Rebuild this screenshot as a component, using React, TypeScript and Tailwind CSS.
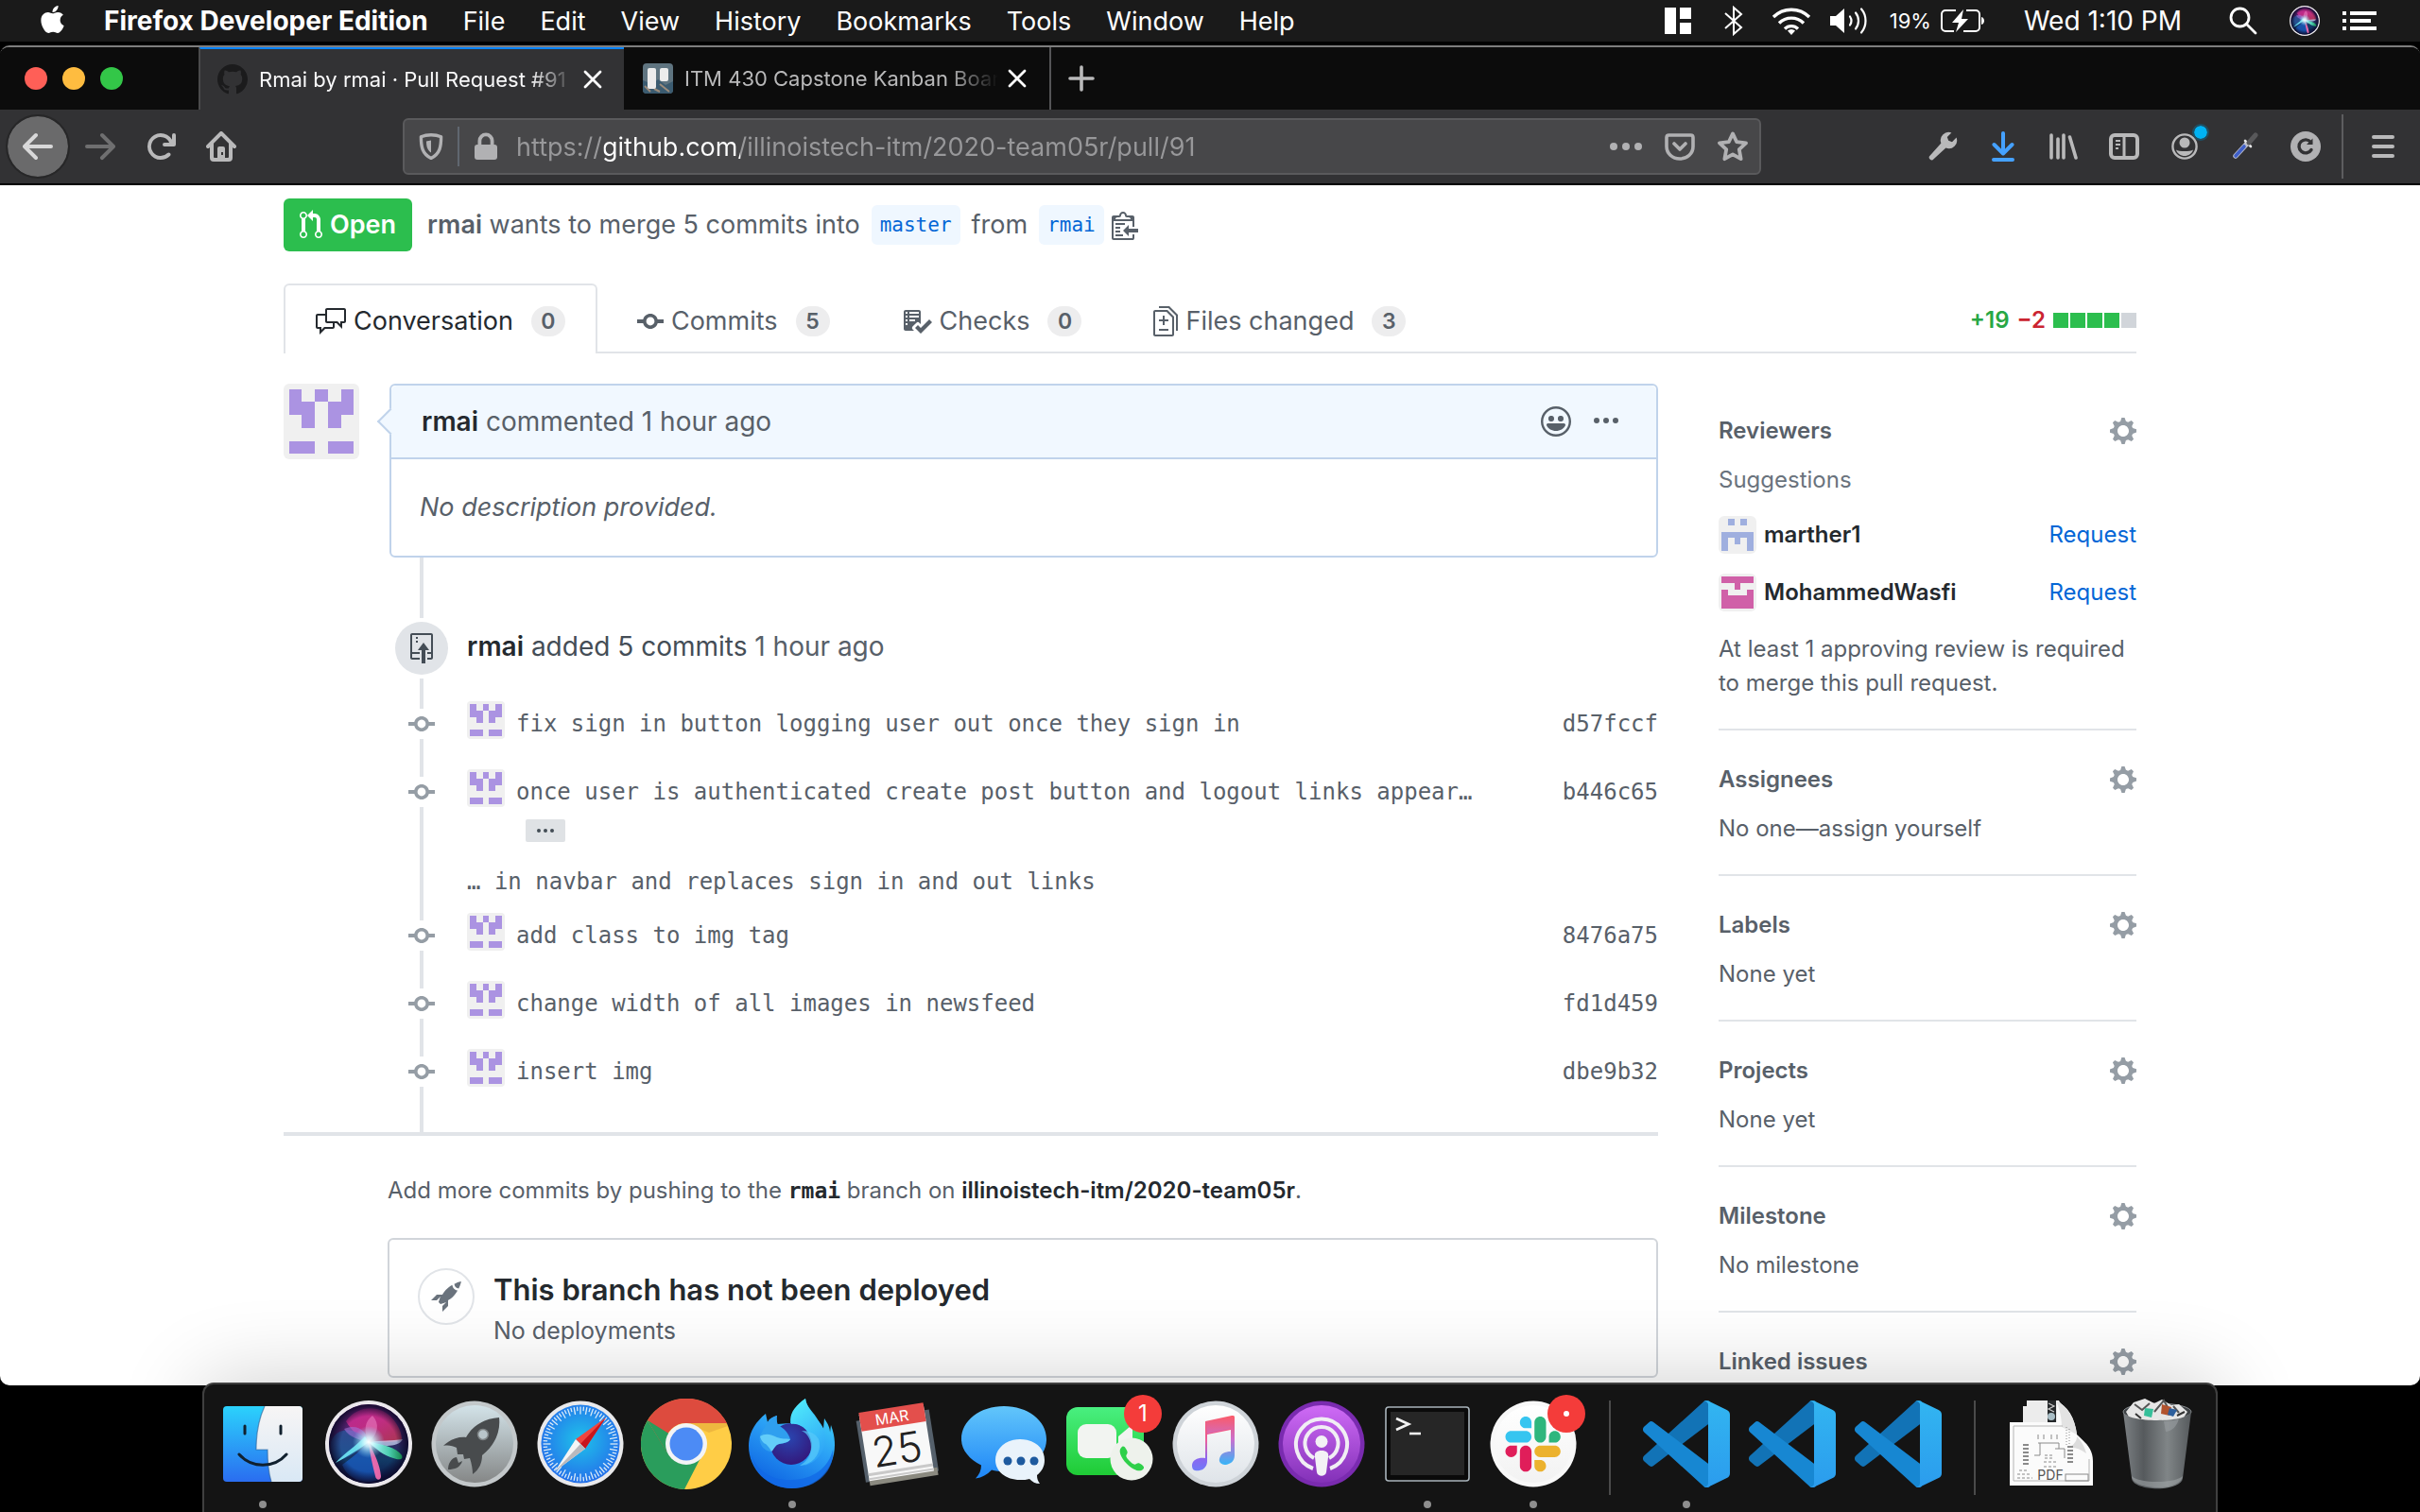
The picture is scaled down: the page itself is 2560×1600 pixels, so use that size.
import type { ReactNode } from "react";
import { FaApple } from "react-icons/fa";

/* ---------- shared icon helper ---------- */

type IconProps = { d: string; vb: string; className: string };

function Glyph({ d, vb, className }: IconProps) {
  return (
    <svg viewBox={vb} className={className} fill="currentColor" fillRule="evenodd" aria-hidden="true">
      <path d={d} />
    </svg>
  );
}

const P = {
  pullRequest:
    "M11 11.28V5c-.03-.78-.34-1.47-.94-2.06C9.46 2.35 8.78 2.03 8 2H7V0L4 3l3 3V4h1c.27.02.48.11.69.31.21.2.3.42.31.69v6.28A1.993 1.993 0 0 0 10 15a1.993 1.993 0 0 0 1-3.72zm-1 2.92c-.66 0-1.2-.55-1.2-1.2 0-.65.55-1.2 1.2-1.2.65 0 1.2.55 1.2 1.2 0 .65-.55 1.2-1.2 1.2zM4 3c0-1.11-.89-2-2-2a1.993 1.993 0 0 0-1 3.72v6.56A1.993 1.993 0 0 0 2 15a1.993 1.993 0 0 0 1-3.72V4.72c.59-.34 1-.98 1-1.72zm-.8 10c0 .66-.55 1.2-1.2 1.2-.65 0-1.2-.55-1.2-1.2 0-.65.55-1.2 1.2-1.2.65 0 1.2.55 1.2 1.2zM2 4.2C1.34 4.2.8 3.65.8 3c0-.65.55-1.2 1.2-1.2.65 0 1.2.55 1.2 1.2 0 .65-.55 1.2-1.2 1.2z",
  discussion:
    "M15 1H6c-.55 0-1 .45-1 1v2H1c-.55 0-1 .45-1 1v6c0 .55.45 1 1 1h1v3l3-3h4c.55 0 1-.45 1-1V9h1l3 3V9h1c.55 0 1-.45 1-1V2c0-.55-.45-1-1-1zM9 11H4.500L3 12.500V11H1V5h4v3c0 .55.45 1 1 1h3v2zm6-3h-2v1.500L11.500 8H6V2h9v6z",
  commit:
    "M10.86 7c-.45-1.72-2-3-3.86-3-1.86 0-3.41 1.28-3.86 3H0v2h3.14c.45 1.72 2 3 3.86 3 1.86 0 3.41-1.28 3.86-3H14V7h-3.14zM7 10.2c-1.22 0-2.2-.98-2.2-2.2 0-1.22.98-2.2 2.2-2.2 1.22 0 2.2.98 2.2 2.2 0 1.22-.98 2.2-2.2 2.2z",
  checklist:
    "M16 8.5l-6 6-3-3L8.500 10l1.500 1.500L14.500 7 16 8.500zM5.7 12.2l.8.8H2c-.55 0-1-.45-1-1V3c0-.55.45-1 1-1h7c.55 0 1 .45 1 1v6.500l-.8-.8c-.39-.39-1.03-.39-1.42 0L5.7 10.8a.996.996 0 0 0 0 1.41v-.01zM4 4h5V3H4v1zm0 2h5V5H4v1zm0 2h3V7H4v1zM3 9H2v1h1V9zm0-2H2v1h1V7zm0-2H2v1h1V5zm0-2H2v1h1V3z",
  diff: "M6 7h2v1H6v2H5V8H3V7h2V5h1v2zm-3 6h5v-1H3v1zM7.500 2L11 5.500V15c0 .55-.45 1-1 1H1c-.55 0-1-.45-1-1V3c0-.55.45-1 1-1h6.500zM10 6L7 3H1v12h9V6zM8.500 0H3v1h5l4 4v8h1V4.500L8.500 0z",
  gear: "M14 8.77v-1.6l-1.94-.64-.45-1.09.88-1.84-1.13-1.13-1.81.91-1.09-.45-.69-1.92h-1.6l-.63 1.94-1.11.45-1.84-.88-1.13 1.13.91 1.81-.45 1.09L0 7.23v1.59l1.94.64.45 1.09-.88 1.84 1.13 1.13 1.81-.91 1.09.45.69 1.92h1.59l.63-1.94 1.11-.45 1.84.88 1.13-1.13-.92-1.81.47-1.09L14 8.75v.02zM7 11c-1.66 0-3-1.34-3-3s1.34-3 3-3 3 1.34 3 3-1.34 3-3 3z",
  smiley:
    "M8 0C3.58 0 0 3.58 0 8s3.58 8 8 8 8-3.58 8-8-3.58-8-8-8zm4.81 12.81a6.72 6.72 0 0 1-2.17 1.45c-.83.36-1.72.53-2.64.53-.92 0-1.81-.17-2.64-.53-.81-.34-1.55-.83-2.17-1.45a6.773 6.773 0 0 1-1.45-2.17A6.59 6.59 0 0 1 1.21 8c0-.92.17-1.81.53-2.64.34-.81.83-1.55 1.45-2.17.62-.62 1.36-1.11 2.17-1.45A6.59 6.59 0 0 1 8 1.21c.92 0 1.81.17 2.64.53.81.34 1.55.83 2.17 1.45.62.62 1.11 1.36 1.45 2.17.36.83.53 1.72.53 2.64 0 .92-.17 1.81-.53 2.64-.34.81-.83 1.55-1.45 2.17zM4 6.8v-.59c0-.66.53-1.19 1.2-1.19h.59c.66 0 1.19.53 1.19 1.19v.59c0 .67-.53 1.2-1.19 1.2H5.2C4.53 8 4 7.47 4 6.8zm5 0v-.59c0-.66.53-1.19 1.2-1.19h.59c.66 0 1.19.53 1.19 1.19v.59c0 .67-.53 1.2-1.19 1.2h-.59C9.53 8 9 7.47 9 6.8zm4 3.2c-.72 1.88-2.91 3-5 3s-4.28-1.13-5-3c-.14-.39.23-1 .66-1h8.59c.41 0 .89.61.75 1z",
  kebab:
    "M1.500 9a1.500 1.500 0 1 0 0-3 1.500 1.500 0 0 0 0 3zm5 0a1.500 1.500 0 1 0 0-3 1.500 1.500 0 0 0 0 3zM13 7.500a1.500 1.500 0 1 1-3 0 1.500 1.500 0 0 1 3 0z",
  repoPush:
    "M4 3H3V2h1v1zM3 5h1V4H3v1zm4 0L4 9h2v7h2V9h2L7 5zm4-5H1C.45 0 0 .45 0 1v12c0 .55.45 1 1 1h4v-1H1v-2h4v-1H1V1h10v9H9v1h2v2H9v1h2c.55 0 1-.45 1-1V1c0-.55-.45-1-1-1z",
  rocket:
    "M12.17 3.83c-.27-.27-.47-.55-.63-.88-.16-.31-.27-.66-.34-1.02-.58.33-1.16.7-1.73 1.13-.58.44-1.14.94-1.69 1.48-.7.7-1.33 1.81-1.78 2.45H3L0 10h3l2-2c-.34.77-1.02 2.98-1 3l1 1c.02.02 2.23-.64 3-1l-2 2v3l3-3v-3c.64-.45 1.75-1.09 2.45-1.78.55-.55 1.05-1.13 1.47-1.7.44-.58.81-1.16 1.14-1.72-.36-.08-.7-.19-1.03-.34a3.39 3.39 0 0 1-.86-.63zM16 0s-.09.38-.3 1.06c-.2.7-.55 1.58-1.06 2.66-.7-.08-1.27-.33-1.66-.72-.39-.39-.63-.94-.7-1.64C13.36.84 14.23.48 14.92.28 15.62.08 16 0 16 0z",
  clippy:
    "M2 13h4v1H2v-1zm5-6H2v1h5V7zm2 3V8l-3 3 3 3v-2h5v-2H9zM4.500 9H2v1h2.500V9zM2 12h2.500v-1H2v1zm9 1h1v2c-.02.28-.11.52-.3.7-.19.18-.42.28-.7.3H1c-.55 0-1-.45-1-1V4c0-.55.45-1 1-1h3c0-1.11.89-2 2-2 1.11 0 2 .89 2 2h3c.55 0 1 .45 1 1v5h-1V6H1v9h10v-2zM2 5h8c0-.55-.45-1-1-1H8c-.55 0-1-.45-1-1s-.45-1-1-1-1 .45-1 1-.45 1-1 1H3c-.55 0-1 .45-1 1z",
  github:
    "M8 0C3.58 0 0 3.58 0 8c0 3.54 2.29 6.53 5.47 7.59.4.07.55-.17.55-.38 0-.19-.01-.82-.01-1.49-2.01.37-2.53-.49-2.69-.94-.09-.23-.48-.94-.82-1.13-.28-.15-.68-.52-.01-.53.63-.01 1.08.58 1.23.82.72 1.21 1.87.87 2.33.66.07-.52.28-.87.51-1.07-1.78-.2-3.64-.89-3.64-3.95 0-.87.31-1.59.82-2.15-.08-.2-.36-1.02.08-2.12 0 0 .67-.21 2.2.82.64-.18 1.32-.27 2-.27.68 0 1.36.09 2 .27 1.53-1.04 2.2-.82 2.2-.82.44 1.1.16 1.92.08 2.12.51.56.82 1.27.82 2.15 0 3.07-1.87 3.75-3.65 3.95.29.25.54.73.54 1.48 0 1.07-.01 1.93-.01 2.2 0 .21.15.46.55.38A8.013 8.013 0 0 0 16 8c0-4.42-3.58-8-8-8z",
  back: "M15 7H3.414l4.293-4.293a1 1 0 0 0-1.414-1.414l-6 6a1 1 0 0 0 0 1.414l6 6a1 1 0 0 0 1.414-1.414L3.414 9H15a1 1 0 0 0 0-2z",
  forward:
    "M15.707 7.293l-6-6a1 1 0 0 0-1.414 1.414L12.586 7H1a1 1 0 0 0 0 2h11.586l-4.293 4.293a1 1 0 1 0 1.414 1.414l6-6a1 1 0 0 0 0-1.414z",
  reload:
    "M15 1a1 1 0 0 0-1 1v2.418A6.995 6.995 0 1 0 8 15a6.954 6.954 0 0 0 4.95-2.05 1 1 0 0 0-1.414-1.414A5.019 5.019 0 1 1 12.549 6H10a1 1 0 0 0 0 2h5a1 1 0 0 0 1-1V2a1 1 0 0 0-1-1z",
  home: "M15.707 7.293l-7-7a1 1 0 0 0-1.414 0l-7 7a1 1 0 0 0 1.414 1.414L2 8.414V14a2 2 0 0 0 2 2h8a2 2 0 0 0 2-2V8.414l.293.293a1 1 0 0 0 1.414-1.414zM12 13.500a.5.5 0 0 1-.5.5H10V9a1 1 0 0 0-1-1H7a1 1 0 0 0-1 1v5H4.500a.5.5 0 0 1-.5-.5V6.414l4-4 4 4zM8 11h1v1.500H8z",
  wrench:
    "M15.300 3.300l-2.300 2.300-1.900-.7-.7-1.900L12.700.7A4.300 4.300 0 0 0 7.200 6.300L1.400 12.700a1.350 1.350 0 1 0 1.900 1.900L9.700 8.800a4.300 4.300 0 0 0 5.600-5.500z",
};

/* ---------- menu bar ---------- */

function SiriIcon({ className }: { className: string }) {
  return (
    <svg viewBox="0 0 92 92" className={className} aria-hidden="true">
      <defs>
        <linearGradient id="siriBg" x1="0" y1="0" x2="0" y2="1">
          <stop offset="0" stopColor="#7a1f7c" />
          <stop offset=".4" stopColor="#3c2263" />
          <stop offset=".7" stopColor="#123a66" />
          <stop offset="1" stopColor="#0c1245" />
        </linearGradient>
        <radialGradient id="siriGlow">
          <stop offset="0" stopColor="#fff" />
          <stop offset=".3" stopColor="#d6fbff" stopOpacity=".85" />
          <stop offset="1" stopColor="#7bdcf5" stopOpacity="0" />
        </radialGradient>
        <radialGradient id="siriEdge">
          <stop offset=".7" stopColor="#0d0a2a" stopOpacity="0" />
          <stop offset="1" stopColor="#0d0a2a" stopOpacity=".95" />
        </radialGradient>
        <linearGradient id="siriPink" x1="0" y1="0" x2="1" y2="1">
          <stop offset="0" stopColor="#c9279a" />
          <stop offset=".5" stopColor="#d22f86" />
          <stop offset="1" stopColor="#c03a4e" />
        </linearGradient>
        <linearGradient id="siriTeal" x1="0" y1="0" x2="1" y2="0">
          <stop offset="0" stopColor="#bff" />
          <stop offset=".6" stopColor="#4fd8b6" />
          <stop offset="1" stopColor="#178a4b" />
        </linearGradient>
      </defs>
      <circle cx="46" cy="46" r="46" fill="#ebe8ec" />
      <circle cx="46" cy="46" r="42" fill="url(#siriBg)" />
      <path d="M22 22C34 4 60 4 72 20c6 7 9 15 9 22-10 3-24 2-35 2C36 40 28 32 22 22z" fill="url(#siriPink)" opacity=".85" />
      <path d="M6 44c4-14 24-20 40 0C40 52 22 62 12 64 7 60 5 52 6 44z" fill="#2463a8" opacity=".65" />
      <path d="M18 68c9-6 20-16 28-24 6 12 9 26 10 40-14 6-32 0-38-16z" fill="#1b5fc4" opacity=".75" />
      <path d="M20 30c14-6 24 2 26 14-8-2-20-4-26-14z" fill="#a36fd8" opacity=".6" />
      <path d="M46 44c-6-12-4-22 4-28 8 8 6 20-4 28z" fill="#ea7cc0" opacity=".6" />
      <path d="M46 44c12-2 24-1 36-3-3 7-18 10-36 3z" fill="#c8d4f2" opacity=".75" />
      <circle cx="46" cy="46" r="42" fill="url(#siriEdge)" />
      <path d="M46 44c14 2 30 6 35 14 2 5-3 5-9 3-10-3-18-9-26-17z" fill="url(#siriTeal)" opacity=".95" />
      <path d="M46 44c6 12 12 24 13 36 0 5-5 5-6 0-3-12-6-24-7-36z" fill="#f06aae" opacity=".95" />
      <path d="M46 44C36 52 22 60 11 66c9-10 22-18 31-28z" fill="#6fe8f5" opacity=".9" />
      <circle cx="46" cy="44" r="17" fill="url(#siriGlow)" />
    </svg>
  );
}

const menus = ["File", "Edit", "View", "History", "Bookmarks", "Tools", "Window", "Help"];

function MenuBar() {
  return (
    <header className="flex h-11 shrink-0 items-center bg-[#1a1a1a] pr-[46px] pl-[39px] text-[27px] leading-none text-white">
      <FaApple className="mr-[38px] -mt-1 size-[33px]" aria-label="Apple menu" />
      <nav className="flex flex-1 items-center gap-[37px]">
        <button className="text-[28px] font-bold">Firefox Developer Edition</button>
        {menus.map((m) => (
          <button key={m}>{m}</button>
        ))}
      </nav>
      <div className="flex items-center">
        <svg viewBox="0 0 28 28" className="w-7" fill="#fff" aria-hidden="true">
          <path d="M0 0h12v28H0zM16 0h12v12H16zM16 16h12v12H16z" />
        </svg>
        <svg viewBox="0 0 20 32" className="ml-[35px] w-5" fill="none" stroke="#fff" strokeWidth="2" aria-hidden="true">
          <path d="M1 8l17 15-8 7V2l8 7L1 24" />
        </svg>
        <svg viewBox="0 0 42 30" className="ml-[30px] w-[42px]" fill="none" stroke="#fff" strokeWidth="3.400" aria-hidden="true">
          <path d="M2 11a27 27 0 0 1 38 0M8 17.500a18.500 18.500 0 0 1 26 0M14 23.500a10 10 0 0 1 14 0" />
          <path d="M21 30l-4-4.500a6 6 0 0 1 8 0z" fill="#fff" stroke="none" />
        </svg>
        <svg viewBox="0 0 42 30" className="ml-5 w-[42px]" fill="none" stroke="#fff" strokeWidth="2.200" strokeLinecap="round" aria-hidden="true">
          <path d="M0 10h6l9-8v26l-9-8H0z" fill="#fff" stroke="none" />
          <path d="M21 10.500c2 3 2 6 0 9M27 6.500c4 5 4 12 0 17M33 2.500c6 7 6 18 0 25" />
        </svg>
        <span className="ml-[21px] text-[22px]">19%</span>
        <svg viewBox="0 0 46 24" className="ml-2.5 w-[46px]" fill="none" stroke="#fff" strokeWidth="2" aria-hidden="true">
          <path d="M16 1H5a4 4 0 0 0-4 4v14a4 4 0 0 0 4 4h9M27 1h10a4 4 0 0 1 4 4v14a4 4 0 0 1-4 4H24" />
          <path d="M43 8c4 1 4 7 0 8z" fill="#fff" stroke="none" />
          <path d="M24 0L12 14h7l-3 10 13-14h-7z" fill="#fff" stroke="none" />
        </svg>
        <time className="ml-[42px] text-[28px]">Wed 1:10 PM</time>
        <svg viewBox="0 0 30 30" className="ml-[50px] w-[30px]" fill="none" stroke="#fff" strokeWidth="2.800" strokeLinecap="round" aria-hidden="true">
          <circle cx="11.500" cy="11.500" r="9.500" />
          <path d="M18.500 18.500L28 28" />
        </svg>
        <SiriIcon className="ml-[34px] size-8" />
        <svg viewBox="0 0 36 20" className="ml-6 w-9" fill="#fff" aria-hidden="true">
          <path d="M0 0h4v4H0zM8 0h28v4H8zM0 8h4v4H0zM8 8h22v4H8zM0 16h4v4H0zM8 16h28v4H8z" />
        </svg>
      </div>
    </header>
  );
}

/* ---------- browser chrome ---------- */

function CloseX() {
  return (
    <svg viewBox="0 0 20 20" className="w-5" fill="none" stroke="#fff" strokeWidth="2.800" strokeLinecap="round" aria-hidden="true">
      <path d="M2 2l16 16M18 2L2 18" />
    </svg>
  );
}

function TabStrip() {
  return (
    <div className="flex h-[66px] shrink-0 items-stretch bg-[#0c0c0c]">
      <div className="flex w-[210px] items-center gap-4 pl-[26px]">
        <button aria-label="Close window" className="size-6 rounded-full bg-[#ff5f57]" />
        <button aria-label="Minimise window" className="size-6 rounded-full bg-[#febc40]" />
        <button aria-label="Zoom window" className="size-6 rounded-full bg-[#33c748]" />
      </div>
      <div className="-mt-0.5 flex w-[450px] items-center border-t-4 border-l-2 border-t-[#0a84ff] border-l-[#4a4a4b] bg-[#323234] pr-[23px] pl-[18px]">
        <Glyph d={P.github} vb="0 0 16 16" className="mr-3 size-8 shrink-0 text-[#1b1b1c]" />
        <span className="flex-1 overflow-hidden text-[22px] whitespace-nowrap text-[#f9f9fa] [mask-image:linear-gradient(to_right,#000_86%,transparent)]">
          Rmai by rmai · Pull Request #91
        </span>
        <button aria-label="Close tab" className="ml-2.5">
          <CloseX />
        </button>
      </div>
      <div className="flex w-[452px] items-center border-r-2 border-[#555557] pr-6 pl-5">
        <svg viewBox="0 0 32 32" className="mr-3 size-8 shrink-0" aria-hidden="true">
          <rect width="32" height="32" rx="4" fill="#5f7480" />
          <path d="M0 18l10 4 6-5 8 6 8-4v9a4 4 0 0 1-4 4H4a4 4 0 0 1-4-4z" fill="#3b5b70" />
          <path d="M2 24l6 6M18 22l10 8M12 27l6 3" stroke="#9b8b7b" strokeWidth="2" />
          <rect x="5" y="5" width="9" height="22" rx="2" fill="#ececec" />
          <rect x="18" y="5" width="9" height="14" rx="2" fill="#ececec" />
        </svg>
        <span className="flex-1 overflow-hidden text-[22px] whitespace-nowrap text-[#b9b9ba] [mask-image:linear-gradient(to_right,#000_84%,transparent)]">
          ITM 430 Capstone Kanban Board
        </span>
        <button aria-label="Close tab" className="ml-2.5">
          <CloseX />
        </button>
      </div>
      <button aria-label="New tab" className="px-[18px]">
        <svg viewBox="0 0 28 28" className="w-7" stroke="#b9b9ba" strokeWidth="3.600" strokeLinecap="round" aria-hidden="true">
          <path d="M14 2v24M2 14h24" />
        </svg>
      </button>
    </div>
  );
}

function ToolButton({ label, children }: { label: string; children: ReactNode }) {
  return (
    <button aria-label={label} className="relative grid size-16 place-items-center">
      {children}
    </button>
  );
}

function Toolbar() {
  return (
    <div className="flex h-20 shrink-0 items-center border-b-2 border-black bg-[#323234] pl-2 text-[#b9b9ba]">
      <button aria-label="Back" className="mr-0.5 grid size-16 place-items-center rounded-full bg-[#6a6a6b] text-[#d8d8d9] outline-2 outline-[#272728]">
        <Glyph d={P.back} vb="0 0 16 16" className="size-8" />
      </button>
      <ToolButton label="Forward">
        <Glyph d={P.forward} vb="0 0 16 16" className="size-8 text-[#6f6f70]" />
      </ToolButton>
      <ToolButton label="Reload">
        <Glyph d={P.reload} vb="0 0 16 16" className="size-8" />
      </ToolButton>
      <ToolButton label="Home">
        <Glyph d={P.home} vb="0 0 16 16" className="size-8" />
      </ToolButton>

      <div className="mx-[160px] flex h-[60px] flex-1 items-center rounded-md border-2 border-[#5a5a5c] bg-[#474749]">
        <svg viewBox="0 0 16 16" className="mx-3 size-8 shrink-0" fill="none" stroke="#b1b1b3" strokeWidth="1.700" aria-hidden="true">
          <path d="M8 1.900c2 0 3.900.4 5.300 1 0 5-.5 8.900-5.300 11.300C3.200 11.800 2.700 7.900 2.700 2.900 4.100 2.300 6 1.900 8 1.900z" strokeLinejoin="round" />
          <path d="M8 4.800v6.400c-2-1.300-2.500-3.300-2.500-6z" fill="#b1b1b3" stroke="none" />
        </svg>
        <span className="h-[42px] w-0.5 bg-[#606770]" />
        <svg viewBox="0 0 16 16" className="mx-3 size-8 shrink-0" fill="#b1b1b3" aria-hidden="true">
          <rect x="2" y="7" width="12" height="8" rx="1.500" />
          <path d="M4.700 8V5a3.300 3.300 0 0 1 6.600 0v3" fill="none" stroke="#b1b1b3" strokeWidth="1.900" />
        </svg>
        <input
          aria-label="Address"
          defaultValue="https://github.com/illinoistech-itm/2020-team05r/pull/91"
          className="ml-1 h-full min-w-0 flex-1 bg-[linear-gradient(to_right,#98989a_0,#98989a_93px,#fff_93px,#fff_237px,#98989a_237px)] bg-clip-text text-[27px] text-transparent outline-none"
        />
        <svg viewBox="0 0 34 8" className="w-[34px]" fill="#b1b1b3" aria-hidden="true">
          <circle cx="4" cy="4" r="4" />
          <circle cx="17" cy="4" r="4" />
          <circle cx="30" cy="4" r="4" />
        </svg>
        <svg viewBox="0 0 16 16" className="ml-6 size-8" fill="none" stroke="#b1b1b3" aria-hidden="true">
          <path d="M1 3.300c0-.9.500-1.300 1.300-1.300h11.400c.8 0 1.300.4 1.300 1.300V8c0 3.700-3 6.500-7 6.500S1 11.700 1 8z" strokeWidth="1.800" />
          <path d="M5 6.500l3 3 3-3" strokeWidth="1.800" strokeLinecap="round" strokeLinejoin="round" />
        </svg>
        <svg viewBox="0 0 16 16" className="mr-3 ml-6 size-8" fill="none" stroke="#b1b1b3" strokeWidth="1.900" strokeLinejoin="round" aria-hidden="true">
          <path d="M8 1.200l2.100 4.400 4.900.6-3.600 3.400.9 5L8 12.200l-4.300 2.400.9-5L1 6.200l4.900-.6z" />
        </svg>
      </div>

      <ToolButton label="Developer tools">
        <Glyph d={P.wrench} vb="0 0 16 16" className="size-8" />
      </ToolButton>
      <ToolButton label="Downloads">
        <svg viewBox="0 0 24 32" className="w-6" fill="none" stroke="#45a1ff" strokeWidth="4" strokeLinecap="round" aria-hidden="true">
          <path d="M12 2v20M2.500 14l9.500 9.500 9.500-9.500M2 30h20" strokeLinejoin="round" />
        </svg>
      </ToolButton>
      <ToolButton label="Library">
        <svg viewBox="0 0 30 28" className="w-[30px]" stroke="#b9b9ba" strokeWidth="3.600" strokeLinecap="round" aria-hidden="true">
          <path d="M2 2v24M9 6v20M15 2v24M21.500 4L28 26" />
        </svg>
      </ToolButton>
      <ToolButton label="Sidebars">
        <svg viewBox="0 0 32 28" className="w-8" fill="none" stroke="#b9b9ba" strokeWidth="4" aria-hidden="true">
          <rect x="2" y="2" width="28" height="24" rx="4" />
          <path d="M16 2v24" strokeWidth="3" />
          <path d="M7 8h5M7 12h5M7 16h3" strokeWidth="2" />
        </svg>
      </ToolButton>
      <ToolButton label="Account">
        <svg viewBox="0 0 28 28" className="w-7" fill="#b9b9ba" aria-hidden="true">
          <circle cx="14" cy="14" r="12.600" fill="none" stroke="#b9b9ba" strokeWidth="2.400" />
          <circle cx="14" cy="10" r="5.500" />
          <path d="M5 17.500c3 2 15 2 18 0-1 4-5 6.500-9 6.500s-8-2.500-9-6.500z" />
        </svg>
        <span className="absolute top-[10px] right-2 size-3.5 rounded-full bg-[#00b3f4] outline-2 outline-[#1f4f63]" />
      </ToolButton>
      <ToolButton label="Colour picker">
        <svg viewBox="0 0 30 30" className="w-[30px]" strokeLinecap="round" aria-hidden="true">
          <path d="M5 25L16 13" stroke="#b9bccb" strokeWidth="5.500" />
          <path d="M5 25L14 15" stroke="#3f5fc8" strokeWidth="3.600" />
          <path d="M15 9l6 6" stroke="#e6e6e6" strokeWidth="2.600" />
          <path d="M19 11l7-8" stroke="#58585a" strokeWidth="5" />
        </svg>
      </ToolButton>
      <ToolButton label="Container tabs">
        <svg viewBox="0 0 32 32" className="w-8" aria-hidden="true">
          <circle cx="16" cy="16" r="16" fill="#b1b1b3" />
          <path d="M21.500 11.500a7 7 0 1 0 .5 8" fill="none" stroke="#323234" strokeWidth="3.400" strokeLinecap="round" />
          <path d="M23.500 7.500v6.500h-6.500z" fill="#323234" />
        </svg>
      </ToolButton>
      <span className="ml-1.5 h-[68px] w-0.5 bg-[#5d5d5f]" />
      <button aria-label="Menu" className="pr-[27px] pl-[30px]">
        <svg viewBox="0 0 24 24" className="w-6" stroke="#b9b9ba" strokeWidth="4" strokeLinecap="round" aria-hidden="true">
          <path d="M2 2h20M2 12h20M2 22h20" />
        </svg>
      </button>
    </div>
  );
}

/* ---------- pull request page ---------- */

const RMAI = ["x.x.x", "xx.xx", ".x.x.", ".....", "xx.xx"];
const MARTHER = [".x.x.", ".....", "xxxxx", "x.x.x", "x...x"];
const WASFI = ["xxxxx", "..x..", "x...x", "xxxxx", "xxxxx"];

function Identicon({ rows, color, className }: { rows: string[]; color: string; className: string }) {
  return (
    <svg viewBox="0 0 70 70" className={className} shapeRendering="crispEdges" role="img" aria-label="avatar">
      <rect width="70" height="70" fill="#f0f0f0" />
      {rows.map((r, y) =>
        [...r].map((c, x) => (c === "x" ? <rect key={x + "-" + y} x={5 + x * 12} y={5 + y * 12} width="12" height="12" fill={color} /> : null)),
      )}
    </svg>
  );
}

function Branch({ name }: { name: string }) {
  return (
    <a href="#branch" className="rounded-md bg-[#eff7ff] px-[9px] py-1.5 font-['DejaVu_Sans_Mono',monospace] text-[21px] leading-[30px] text-[#0366d6]">
      {name}
    </a>
  );
}

const prTabs = [
  { name: "Conversation", count: 0, d: P.discussion, vb: "0 0 16 16", cls: "w-8" },
  { name: "Commits", count: 5, d: P.commit, vb: "0 0 14 16", cls: "w-7" },
  { name: "Checks", count: 0, d: P.checklist, vb: "0 0 16 16", cls: "w-8" },
  { name: "Files changed", count: 3, d: P.diff, vb: "0 0 13 16", cls: "w-[26px]" },
];

function PrTabs() {
  return (
    <div className="mt-[34px] flex items-stretch border-b-2 border-[#e1e4e8]">
      <nav className="-mb-0.5 flex flex-1 gap-2">
        {prTabs.map((t, i) => (
          <a
            key={t.name}
            href="#tab"
            className={
              "flex h-[74px] items-center gap-2 rounded-t-md border-2 border-b-0 px-8 pt-1 text-[27px] " +
              (i === 0 ? "border-[#e1e4e8] bg-white text-[#24292e]" : "border-transparent text-[#586069]")
            }
          >
            <Glyph d={t.d} vb={t.vb} className={t.cls} />
            {t.name}
            <span className="ml-[11px] min-w-9 rounded-full bg-[#ededee] text-center text-[23px] leading-8 font-semibold text-[#586069]">{t.count}</span>
          </a>
        ))}
      </nav>
      <div className="flex items-center gap-2 pt-1.5 text-[24px] font-semibold">
        <span className="text-[#28a745]">+19</span>
        <span className="text-[#cb2431]">−2</span>
        <div className="flex gap-0.5">
          <span className="size-4 bg-[#2cbe4e]" />
          <span className="size-4 bg-[#2cbe4e]" />
          <span className="size-4 bg-[#2cbe4e]" />
          <span className="size-4 bg-[#2cbe4e]" />
          <span className="size-4 bg-[#d1d5da]" />
        </div>
      </div>
    </div>
  );
}

function CommentBox() {
  return (
    <div className="flex items-start gap-8">
      <Identicon rows={RMAI} color="#ab93e2" className="size-20 rounded-md" />
      <article className="relative flex-1 rounded-md border-2 border-[#c0d3eb]">
        <span className="absolute top-7 -left-[11px] size-5 rotate-45 border-b-2 border-l-2 border-[#c0d3eb] bg-[#f1f8ff]" />
        <header className="flex h-[78px] items-center rounded-t-md border-b-2 border-[#c0d3eb] bg-[#f1f8ff] pr-10 pl-8 text-[28px] text-[#586069]">
          <p className="flex-1">
            <a href="#rmai" className="font-semibold text-[#24292e]">rmai</a> commented 1 hour ago
          </p>
          <button aria-label="Add reaction">
            <Glyph d={P.smiley} vb="0 0 16 16" className="size-8" />
          </button>
          <button aria-label="More options" className="ml-6">
            <Glyph d={P.kebab} vb="0 0 13 16" className="h-8 w-[26px]" />
          </button>
        </header>
        <p className="px-[30px] py-8 text-[27px] leading-[38px] text-[#586069] italic">No description provided.</p>
      </article>
    </div>
  );
}

const commits = [
  { msg: "fix sign in button logging user out once they sign in", sha: "d57fccf" },
  { msg: "once user is authenticated create post button and logout links appear…", sha: "b446c65", more: "… in navbar and replaces sign in and out links" },
  { msg: "add class to img tag", sha: "8476a75" },
  { msg: "change width of all images in newsfeed", sha: "fd1d459" },
  { msg: "insert img", sha: "dbe9b32" },
];

function Timeline() {
  return (
    <section className="ml-[118px]">
      <div className="flex items-start gap-5">
        <div className="flex w-14 flex-col items-center">
          <span className="h-16 w-1 bg-[#e1e4e8]" />
          <span className="my-1 grid size-14 place-items-center rounded-full bg-[#e1e4e8] text-[#444d56]">
            <Glyph d={P.repoPush} vb="0 0 12 16" className="h-8 w-6" />
          </span>
          <span className="h-3 w-1 bg-[#e1e4e8]" />
        </div>
        <p className="mt-[74px] text-[28px] leading-10 text-[#444d56]">
          <a href="#rmai" className="font-semibold text-[#24292e]">rmai</a> added 5 commits <span className="text-[#586069]">1 hour ago</span>
        </p>
      </div>
      <ul>
        {commits.map((c) => (
          <li key={c.sha} className="flex gap-5 font-['DejaVu_Sans_Mono',monospace] text-[24px] leading-9 text-[#586069]">
            <div className="flex w-14 flex-col items-center">
              <span className="h-5 w-1 bg-[#e1e4e8]" />
              <Glyph d={P.commit} vb="0 0 14 16" className="h-8 w-7 text-[#959da5]" />
              <span className="w-1 flex-1 bg-[#e1e4e8]" />
            </div>
            <div className={"flex-1 " + (c.more ? "h-[152px]" : "h-[72px]")}>
              <div className="flex items-start pt-3">
                <Identicon rows={RMAI} color="#ab93e2" className="mr-3 size-10 rounded-sm" />
                <a href="#commit" className="mt-1.5 flex-1">{c.msg}</a>
                <a href="#sha" className="mt-1.5">{c.sha}</a>
              </div>
              {c.more && (
                <>
                  <button aria-label="Show message" className="mt-[11px] ml-[62px] flex h-6 w-[42px] items-center justify-center gap-[3px] rounded-xs bg-[#dfe2e5]">
                    <span className="size-1 rounded-full bg-[#444d56]" />
                    <span className="size-1 rounded-full bg-[#444d56]" />
                    <span className="size-1 rounded-full bg-[#444d56]" />
                  </button>
                  <p className="mt-6">{c.more}</p>
                </>
              )}
            </div>
          </li>
        ))}
      </ul>
      <div className="flex w-14 justify-center">
        <span className="h-7 w-1 bg-[#e1e4e8]" />
      </div>
    </section>
  );
}

function SideHeading({ title }: { title: string }) {
  return (
    <h3 className="flex items-center justify-between leading-9 font-semibold">
      {title}
      <button aria-label={"Edit " + title}>
        <Glyph d={P.gear} vb="0 0 14 16" className="h-8 w-7 text-[#959da5]" />
      </button>
    </h3>
  );
}

function Reviewer({ name, rows, color }: { name: string; rows: string[]; color: string }) {
  return (
    <div className="flex items-center">
      <Identicon rows={rows} color={color} className="mr-2 size-10 rounded-md" />
      <a href="#user" className="flex-1 font-semibold text-[#24292e]">{name}</a>
      <button className="text-[#0366d6]">Request</button>
    </div>
  );
}

const sideSections = [
  ["Assignees", "No one—assign yourself"],
  ["Labels", "None yet"],
  ["Projects", "None yet"],
  ["Milestone", "No milestone"],
];

function Sidebar() {
  return (
    <aside className="w-[442px] shrink-0 text-[24px] leading-9 text-[#586069]">
      <section className="border-b-2 border-[#e1e4e8] pt-8 pb-[30px]">
        <SideHeading title="Reviewers" />
        <p className="mt-4 mb-5 text-[#6a737d]">Suggestions</p>
        <div className="mb-[22px] flex flex-col gap-[21px]">
          <Reviewer name="marther1" rows={MARTHER} color="#9fafdf" />
          <Reviewer name="MohammedWasfi" rows={WASFI} color="#d060a8" />
        </div>
        <p>At least 1 approving review is required to merge this pull request.</p>
      </section>
      {sideSections.map(([t, v]) => (
        <section key={t} className="border-b-2 border-[#e1e4e8] pt-[34px] pb-[30px]">
          <SideHeading title={t} />
          <p className="mt-4">{v}</p>
        </section>
      ))}
      <section className="pt-[34px]">
        <SideHeading title="Linked issues" />
      </section>
    </aside>
  );
}

function PullRequestPage() {
  return (
    <main className="min-h-0 flex-1 overflow-hidden bg-white px-10">
      <div className="mx-auto max-w-[1960px] pt-3.5">
        <div className="flex items-center text-[27px] text-[#586069]">
          <span className="flex h-14 items-center gap-2 rounded-md bg-[#2cbe4e] px-[17px] font-semibold text-white">
            <Glyph d={P.pullRequest} vb="0 0 12 16" className="h-8 w-6" />
            Open
          </span>
          <p className="ml-4 flex items-center gap-3">
            <span>
              <a href="#rmai" className="font-semibold">rmai</a> wants to merge 5 commits into
            </span>
            <Branch name="master" />
            from
            <Branch name="rmai" />
          </p>
          <button aria-label="Copy branch name" className="ml-2">
            <Glyph d={P.clippy} vb="0 0 14 16" className="h-8 w-7" />
          </button>
        </div>
        <PrTabs />
        <div className="mt-8 flex items-start gap-16">
          <div className="min-w-0 flex-1">
            <CommentBox />
            <Timeline />
            <div className="border-t-4 border-[#e1e4e8] pt-10 pl-[110px]">
              <p className="text-[24px] leading-9 text-[#586069]">
                Add more commits by pushing to the{" "}
                <b className="font-['DejaVu_Sans_Mono',monospace] text-[23px] text-[#24292e]">rmai</b> branch on{" "}
                <b className="font-semibold text-[#24292e]">illinoistech-itm/2020-team05r</b>.
              </p>
              <section className="mt-8 flex h-[148px] gap-5 rounded-md border-2 border-[#d1d5da] px-[30px] pt-[30px]">
                <span className="grid size-[60px] place-items-center rounded-full border-2 border-[#e1e4e8] text-[#6a737d]">
                  <Glyph d={P.rocket} vb="0 0 16 16" className="size-8" />
                </span>
                <div>
                  <h2 className="text-[31px] leading-[46px] font-semibold text-[#24292e]">This branch has not been deployed</h2>
                  <p className="text-[25px] leading-10 text-[#586069]">No deployments</p>
                </div>
              </section>
            </div>
          </div>
          <Sidebar />
        </div>
      </div>
    </main>
  );
}

/* ---------- dock ---------- */

function Round({ from, to, ring, id, children }: { from: string; to: string; ring: string; id: string; children: ReactNode }) {
  return (
    <svg viewBox="0 0 92 92" className="size-[92px]" aria-hidden="true">
      <defs>
        <linearGradient id={id} x1="0" y1="0" x2="0" y2="1">
          <stop offset="0" stopColor={from} />
          <stop offset="1" stopColor={to} />
        </linearGradient>
      </defs>
      <circle cx="46" cy="46" r="45.500" fill={ring} />
      <circle cx="46" cy="46" r="41" fill={"url(#" + id + ")"} />
      {children}
    </svg>
  );
}

function FinderIcon() {
  return (
    <svg viewBox="0 0 84 80" className="w-[84px]" aria-hidden="true">
      <defs>
        <linearGradient id="finderL" x1="0" y1="0" x2="0" y2="1">
          <stop offset="0" stopColor="#2bd2fc" />
          <stop offset="1" stopColor="#2a6df0" />
        </linearGradient>
        <linearGradient id="finderR" x1="0" y1="0" x2="0" y2="1">
          <stop offset="0" stopColor="#f7f5f5" />
          <stop offset="1" stopColor="#d9e8f5" />
        </linearGradient>
      </defs>
      <rect width="84" height="80" rx="4" fill="url(#finderL)" />
      <path d="M44 0C37 15 35 31 35 46h12c0 12 1 24 4 34h29a4 4 0 0 0 4-4V4a4 4 0 0 0-4-4z" fill="url(#finderR)" />
      <path d="M44 0C37 15 35 31 35 46h12c0 12 1 24 4 34" fill="none" stroke="#2c5f95" strokeWidth="1.200" opacity=".6" />
      <path d="M23 21v8M61 21v8M17 51c13 15 37 15 50 0" fill="none" stroke="#10202e" strokeWidth="3" strokeLinecap="round" />
    </svg>
  );
}

function LaunchpadIcon() {
  return (
    <Round id="launch" from="#d3e3e9" to="#858787" ring="#c3c8ca">
      <path d="M72 18c-15 1-28 8-35 21-9-1-18 3-24 9 5-1 10 0 14 2l1 7h6l1 5 6-1c2 6 3 12 3 17 7-5 10-12 10-20 12-9 20-24 18-40z" fill="#484b4d" />
      <circle cx="55" cy="36" r="5.500" fill="#b9c5ca" stroke="#7d8284" strokeWidth="1.500" />
      <path d="M27 60c-6 1-9 7-9 13 7 0 13-2 15-9l-4 2z" fill="#484b4d" />
    </Round>
  );
}

function SafariIcon() {
  return (
    <svg viewBox="0 0 92 92" className="size-[92px]" aria-hidden="true">
      <defs>
        <radialGradient id="safari" cx=".5" cy=".45" r=".55">
          <stop offset="0" stopColor="#1fc3ea" />
          <stop offset="1" stopColor="#2470ea" />
        </radialGradient>
      </defs>
      <circle cx="46" cy="46" r="45.500" fill="#e9e9eb" />
      <circle cx="46" cy="46" r="41.500" fill="url(#safari)" />
      {Array.from({ length: 72 }, (_, i) => (
        <path key={i} d={i % 2 ? "M46 6.500v4.500" : "M46 6.500v8"} stroke="#dcecf8" strokeWidth="1.300" transform={`rotate(${i * 5} 46 46)`} />
      ))}
      <path d="M73 18L41 41l10 10z" fill="#f0453f" />
      <path d="M73 18L46 46l5 5z" fill="#c9151c" />
      <path d="M19 75l22-34 10 10z" fill="#f5f5f5" />
      <path d="M19 75l27-29 5 5z" fill="#b9b9bd" />
    </svg>
  );
}

function ChromeIcon() {
  return (
    <svg viewBox="0 0 96 96" className="size-24 shrink-0" aria-hidden="true">
      <circle cx="48" cy="48" r="48" fill="#ffcd46" />
      <path d="M7 23A48 48 0 0 0 46 96L65 59 48 66 30 60z" fill="#2a9d5c" />
      <path d="M7 23A48 48 0 0 1 91 26H48a22 22 0 0 0-20 32z" fill="#dd4b3e" />
      <path d="M7 23l21 35a22 22 0 0 0 37 1" fill="#2a9d5c" />
      <path d="M48 26h43l1 3-20 7z" fill="#e3a93a" opacity=".6" />
      <circle cx="48" cy="48" r="22" fill="#f3f4f5" />
      <circle cx="48" cy="48" r="17.500" fill="#4c8bf5" />
    </svg>
  );
}

function FirefoxIcon() {
  return (
    <svg viewBox="0 0 92 96" className="h-24 w-[92px] shrink-0" aria-hidden="true">
      <defs>
        <linearGradient id="fx1" x1=".85" y1="0" x2=".35" y2="1">
          <stop offset="0" stopColor="#45dcf8" />
          <stop offset=".5" stopColor="#2a9ff5" />
          <stop offset="1" stopColor="#0f66e3" />
        </linearGradient>
        <linearGradient id="fx2" x1=".3" y1="0" x2=".7" y2="1">
          <stop offset="0" stopColor="#4fe9fb" />
          <stop offset="1" stopColor="#2b9ef6" />
        </linearGradient>
        <radialGradient id="fx3" cx=".45" cy=".35" r=".65">
          <stop offset="0" stopColor="#2a45b0" />
          <stop offset="1" stopColor="#33197c" />
        </radialGradient>
      </defs>
      <path
        d="M18 16l2 9c2-4 6-6 10-7-1 3 0 6 0 9l14-1C45 14 52 6 60 0c1 9 9 14 14 24l5 8 1-11c4 6 6 10 6 15l1-8c3 8 4 14 4 21 0 26-20 46-45.500 46S0 75 0 50c0-14 7-25 18-34z"
        fill="url(#fx1)"
      />
      <circle cx="45" cy="48" r="22" fill="url(#fx3)" />
      <path d="M60 0C48 8 42 18 45 27c6-1 13 2 17 8 8 12 6 26-3 36 14-4 23-16 22-32C80 24 62 16 60 0z" fill="url(#fx2)" />
      <path d="M56 34c6 3 10 9 10 17 0 9-5 16-12 20 16-1 24-16 20-28-3-6-10-9-18-9z" fill="#55c8fa" opacity=".75" />
      <path d="M20 25c2-4 6-6 10-7-1 4 0 7 1 10 6 3 11 8 13 15-3 5-10 4-15 6-3 2-3 6-6 7C16 55 10 48 12 39z" fill="#2f9fef" />
      <path d="M12 40c6-4 12-2 18 1 5 2 9 1 14 2-2 4-8 4-12 5-5 2-5 6-8 8-2-4-4-6-6-8-3-1-5-4-6-8z" fill="#63cdf9" />
      <path d="M3 60c6 17 22 27 42 26 24 0 40-14 44-32 2 22-16 41-43.500 41C24 95 7 80 3 60z" fill="#1268e6" opacity=".75" />
    </svg>
  );
}

function CalendarIcon() {
  return (
    <svg viewBox="0 0 92 92" className="size-[92px]" aria-hidden="true">
      <g transform="rotate(-9 46 46)">
        <path d="M6 15h78v66H6z" fill="#55606b" />
        <path d="M10 77h73v8H10z" fill="#8b8a80" />
        <path d="M10 9h69v71H10z" fill="#f8f8f8" />
        <path d="M10 72h69v3H10zM10 77h69v2H10z" fill="#c9c9c9" />
        <path d="M10 7h69v20H10z" fill="#e34f4c" />
        <text x="44" y="23" textAnchor="middle" fontSize="16" fill="#fff" className="font-[Inter]">
          MAR
        </text>
        <text x="44" y="67" textAnchor="middle" fontSize="44" fill="#222" className="font-[Inter] font-light">
          25
        </text>
      </g>
    </svg>
  );
}

function MessagesIcon() {
  return (
    <svg viewBox="0 0 92 92" className="size-[92px]" aria-hidden="true">
      <defs>
        <linearGradient id="msg" x1="0" y1="0" x2="0" y2="1">
          <stop offset="0" stopColor="#62c6fb" />
          <stop offset="1" stopColor="#1e86f7" />
        </linearGradient>
      </defs>
      <path d="M46 6c25 0 45 15 45 35S71 75 46 75c-5 0-9-.5-13-1.500-5 5-10 8-17 9 4-4 6-9 6-14C9 62 1 52 1 41 1 21 21 6 46 6z" fill="url(#msg)" />
      <path d="M63 41c15 0 26 9 26 22 0 7-3 12-8 16 0 4 1 6 3 9-5 0-8-2-11-5-3 1-6 1-10 1-15 0-26-9-26-21s11-22 26-22z" fill="#e9f3fb" />
      <circle cx="50" cy="64" r="4.500" fill="#1d5a9f" />
      <circle cx="64" cy="64" r="4.500" fill="#1d5a9f" />
      <circle cx="78" cy="64" r="4.500" fill="#1d5a9f" />
    </svg>
  );
}

function FaceTimeIcon() {
  return (
    <svg viewBox="0 0 92 92" className="size-[92px]" aria-hidden="true">
      <defs>
        <linearGradient id="ft" x1="0" y1="0" x2="0" y2="1">
          <stop offset="0" stopColor="#49ef80" />
          <stop offset="1" stopColor="#1fcb35" />
        </linearGradient>
      </defs>
      <rect x="0" y="7" width="82" height="72" rx="12" fill="url(#ft)" />
      <rect x="12" y="25" width="41" height="36" rx="9" fill="#f2f4f1" />
      <path d="M55 38l13-11c1-1 2 0 2 1v26H55z" fill="#f2f4f1" />
      <circle cx="69" cy="62" r="22.500" fill="#eef2ec" />
      <path d="M58 50c-3 3-1 10 6 17s14 9 17 6c2-2 1-3-1-5-3-2-4-2-6-1-2 2-5-1-7-3s-5-5-3-7c1-2 1-3-1-6s-3-3-5-1z" fill="#2fd04a" />
    </svg>
  );
}

function MusicIcon() {
  return (
    <Round id="music" from="#ffffff" to="#dfe4e9" ring="#ced3d8">
      <defs>
        <linearGradient id="note" x1="0" y1="0" x2="0" y2="1">
          <stop offset="0" stopColor="#fb4f6b" />
          <stop offset=".4" stopColor="#e8609f" />
          <stop offset=".75" stopColor="#8b66f0" />
          <stop offset="1" stopColor="#6f7bf8" />
        </linearGradient>
        <linearGradient id="noteR" x1="0" y1="0" x2="0" y2="1">
          <stop offset="0" stopColor="#fb5a68" />
          <stop offset=".5" stopColor="#c870d0" />
          <stop offset="1" stopColor="#35b5f8" />
        </linearGradient>
      </defs>
      <path d="M35 22v39c-6-1-14 1-14 8 0 5 4 6 8 5 6-1 8-6 8-10V36l25-5v-6z" fill="url(#note)" />
      <path d="M35 22l28-6c2 0 3 0 3 2v40c0 6-4 9-9 10-4 0-8-2-7-6 1-6 6-8 12-8V30l-25 5z" fill="url(#noteR)" />
    </Round>
  );
}

function PodcastsIcon() {
  return (
    <Round id="pod" from="#cf6bf6" to="#8331b8" ring="#7a2bb0">
      <g fill="none" stroke="#f1eef4" strokeWidth="4">
        <path d="M37 72a27 27 0 1 1 18 0" />
        <path d="M38 61a17.500 17.500 0 1 1 16 0" />
      </g>
      <circle cx="46" cy="43.500" r="6.500" fill="#f3f1f5" />
      <path d="M46 53c5 0 8 2 7 7l-2 16c-1 5-9 5-10 0l-2-16c-1-5 2-7 7-7z" fill="#f3f1f5" />
    </Round>
  );
}

function TerminalIcon() {
  return (
    <svg viewBox="0 0 90 80" className="w-[90px]" aria-hidden="true">
      <rect x="1" y="1" width="88" height="78" rx="3" fill="#0a0a0a" stroke="#a9b4bb" strokeWidth="1.600" />
      <rect x="6" y="6" width="78" height="67" fill="#262626" />
      <path d="M12 13l13 6-13 6" fill="none" stroke="#f2f2f2" strokeWidth="2.800" />
      <path d="M26 29h12" stroke="#f2f2f2" strokeWidth="2.600" />
    </svg>
  );
}

function SlackIcon() {
  return (
    <Round id="slack" from="#ffffff" to="#f2f2f2" ring="#f8f8f8">
      <g transform="translate(16.500 17) scale(.475)">
        <path fill="#e01e5a" d="M25.800 77.600c0 7.100-5.800 12.900-12.900 12.900S0 84.700 0 77.600s5.800-12.900 12.900-12.900h12.900v12.900zm6.500 0c0-7.100 5.800-12.900 12.900-12.900s12.900 5.800 12.900 12.900v32.300c0 7.100-5.800 12.900-12.900 12.900s-12.900-5.800-12.900-12.900V77.600z" />
        <path fill="#36c5f0" d="M45.200 25.800c-7.100 0-12.900-5.800-12.900-12.900S38.100 0 45.200 0s12.900 5.800 12.900 12.900v12.900H45.200zm0 6.500c7.100 0 12.900 5.800 12.900 12.900s-5.800 12.900-12.900 12.900H12.900C5.800 58.100 0 52.300 0 45.200s5.800-12.900 12.900-12.900h32.300z" />
        <path fill="#2eb67d" d="M97 45.200c0-7.100 5.800-12.900 12.900-12.900s12.900 5.800 12.900 12.900-5.800 12.900-12.900 12.900H97V45.200zm-6.500 0c0 7.100-5.800 12.900-12.900 12.900s-12.900-5.800-12.900-12.900V12.900C64.700 5.800 70.500 0 77.600 0s12.900 5.800 12.900 12.900v32.300z" />
        <path fill="#ecb22e" d="M77.600 97c7.100 0 12.900 5.800 12.900 12.900s-5.800 12.900-12.900 12.900-12.900-5.800-12.900-12.900V97h12.900zm0-6.500c-7.100 0-12.900-5.800-12.900-12.900s5.800-12.900 12.900-12.900h32.300c7.100 0 12.900 5.800 12.900 12.900s-5.800 12.900-12.900 12.900H77.600z" />
      </g>
    </Round>
  );
}

function CodeIcon() {
  return (
    <svg viewBox="0 0 100 100" className="size-[92px]" aria-hidden="true">
      <defs>
        <linearGradient id="vsc" x1="0" y1="0" x2="0" y2="1">
          <stop offset="0" stopColor="#32b5f1" />
          <stop offset="1" stopColor="#2b9ced" />
        </linearGradient>
      </defs>
      <path fill="#1273b6" d="M77 1a6.230 6.230 0 0 0-8.200 1.100L1.300 63.600a4.170 4.170 0 0 0 0 6.160l5.510 5.010a4.170 4.170 0 0 0 5.320.24L77 25.800z" />
      <path fill="#1787d2" d="M77 99a6.230 6.230 0 0 1-8.200-1.100L1.300 36.400a4.170 4.170 0 0 1 0-6.160l5.510-5.010a4.170 4.170 0 0 1 5.320-.24L77 74.200z" />
      <path fill="url(#vsc)" d="M75.860 99.130a6.230 6.230 0 0 1-7.100-1.210c2.300 2.300 6.250.67 6.250-2.600V4.680c0-3.270-3.950-4.900-6.260-2.590a6.230 6.230 0 0 1 7.100-1.200l20.600 9.900a6.250 6.250 0 0 1 3.540 5.630v67.160a6.250 6.250 0 0 1-3.540 5.640z" />
    </svg>
  );
}

function PdfIcon() {
  return (
    <svg viewBox="0 0 88 92" className="w-[88px]" aria-hidden="true">
      <path d="M18 0h34l18 34H14V6h4z" fill="#ececec" />
      <path d="M40 0h8v22h-8z" fill="#26292b" />
      <path d="M41 3l6 3-6 3 6 3-6 3" fill="none" stroke="#d0d0d0" strokeWidth="1.200" />
      <circle cx="44" cy="16" r="4" fill="#a9bec6" />
      <path d="M0 23h50C50 10 50 4 49 0c12 6 20 18 22 36 8 8 17 14 17 28v26H0z" fill="#fbfbfb" />
      <path d="M40 0h9v23h-9z" fill="#26292b" />
      <path d="M41 3l6 3-6 3 6 3" fill="none" stroke="#d0d0d0" strokeWidth="1.200" />
      <circle cx="44" cy="17" r="4" fill="#a9bec6" />
      <path d="M49 0c12 6 20 18 22 36l-16-8C55 16 52 8 49 0z" fill="#e3e3e3" />
      <path d="M62 50c6-1 12 1 19 6-2-8-6-14-10-18 0 5-3 9-9 12z" fill="#dcdcdc" />
      <path d="M4 27h52M4 27v58h80V62" fill="none" stroke="#b5b5b5" />
      <g fill="none" stroke="#8a8a8a">
        <path d="M30 36v5M36 36v5M44 36v5M50 36v5M30 45h22v6M32 45v13h-6M48 51h10v10" />
        <path d="M17 46v22M64 48v20" strokeWidth="6" strokeDasharray="2 2" />
        <path d="M37 58h10M37 61h10M36 65h14M36 70h14" strokeDasharray="3 2" />
        <path d="M8 78h14M8 82h16M10 74h10" strokeDasharray="3 2" />
        <path d="M60 28v20M63 30v16" strokeDasharray="1 2" />
        <rect x="59" y="78" width="24" height="7" />
      </g>
      <text x="43" y="84" textAnchor="middle" fontSize="14" fill="#555" className="font-[Inter]">
        PDF
      </text>
    </svg>
  );
}

function TrashIcon() {
  return (
    <svg viewBox="0 0 74 96" className="h-24 w-[74px] shrink-0" aria-hidden="true">
      <defs>
        <linearGradient id="can" x1="0" y1="0" x2="1" y2="0">
          <stop offset="0" stopColor="#7c8184" />
          <stop offset=".3" stopColor="#565a5d" />
          <stop offset=".65" stopColor="#808587" />
          <stop offset="1" stopColor="#55595c" />
        </linearGradient>
      </defs>
      <ellipse cx="37" cy="14" rx="36" ry="9" fill="#3d4144" stroke="#8a8f92" />
      <path d="M4 14l8-10 12-4 10 5 8-4 10 6 8-1 9 8-6 9H9z" fill="#e6e6e6" />
      <path d="M13 6l8 6 8-7M34 14l10-12 8 14M54 8l6 7" fill="none" stroke="#555" strokeWidth="2" />
      <path d="M24 10l9 1-2 9-8-2z" fill="#35bf9a" />
      <path d="M42 6l10 3-2 9-9-2z" fill="#b2532e" />
      <path d="M50 10l8 2-4 7-6-2z" fill="#2d5f9c" />
      <path d="M14 16l6 5M58 18l8-4" stroke="#333" strokeWidth="2" />
      <path d="M1 14c4 12 68 12 72 0l-9 70c-1 15-53 15-54 0z" fill="url(#can)" />
      <path d="M10 82c8 8 46 8 54 0-1 16-53 16-54 0z" fill="#a3a8aa" opacity=".55" />
      <path d="M44 24c8 0 14-1 16-3-2 9-9 14-14 14z" fill="#9a9fa1" opacity=".6" />
    </svg>
  );
}

function DockItem({ name, running, badge, children }: { name: string; running?: boolean; badge?: ReactNode; children: ReactNode }) {
  return (
    <li className="flex w-28 flex-col items-center">
      <button aria-label={name} className="relative flex size-[92px] items-center justify-center">
        {children}
        {badge && (
          <span className="absolute -top-[6px] -right-[9px] grid size-10 place-items-center rounded-full bg-[#f43c3a] text-[24px] leading-none text-white">
            {badge}
          </span>
        )}
      </button>
      <span className={"mt-3.5 size-2 rounded-full " + (running ? "bg-[#8e8e8e]" : "bg-transparent")} />
    </li>
  );
}

function DockDivider() {
  return (
    <li className="flex w-[50px] justify-center" role="separator">
      <span className="h-[100px] w-0.5 bg-[#4a4a4a]" />
    </li>
  );
}

function Dock() {
  return (
    <div className="absolute inset-x-0 bottom-0 flex justify-center">
      <ul className="flex h-[137px] items-start rounded-t-xl border-2 border-b-0 border-[#404040] bg-[#141414] px-1.5 pt-[17px] shadow-[0_0_90px_rgba(0,0,0,0.2)]">
        <DockItem name="Finder" running><FinderIcon /></DockItem>
        <DockItem name="Siri"><SiriIcon className="size-[92px]" /></DockItem>
        <DockItem name="Launchpad"><LaunchpadIcon /></DockItem>
        <DockItem name="Safari"><SafariIcon /></DockItem>
        <DockItem name="Chrome"><ChromeIcon /></DockItem>
        <DockItem name="Firefox Developer Edition" running><FirefoxIcon /></DockItem>
        <DockItem name="Calendar"><CalendarIcon /></DockItem>
        <DockItem name="Messages"><MessagesIcon /></DockItem>
        <DockItem name="FaceTime" badge="1"><FaceTimeIcon /></DockItem>
        <DockItem name="Music"><MusicIcon /></DockItem>
        <DockItem name="Podcasts"><PodcastsIcon /></DockItem>
        <DockItem name="Terminal" running><TerminalIcon /></DockItem>
        <DockItem name="Slack" running badge={<span className="size-1.5 rounded-full bg-white" />}><SlackIcon /></DockItem>
        <DockDivider />
        <DockItem name="Visual Studio Code" running><CodeIcon /></DockItem>
        <DockItem name="Code window 2"><CodeIcon /></DockItem>
        <DockItem name="Code window 3"><CodeIcon /></DockItem>
        <DockDivider />
        <DockItem name="PDF document"><PdfIcon /></DockItem>
        <DockItem name="Trash"><TrashIcon /></DockItem>
      </ul>
    </div>
  );
}

export default function App() {
  return (
    <div className="relative flex h-screen flex-col overflow-hidden bg-black font-[Inter,sans-serif]">
      <MenuBar />
      <div className="mt-1 mb-[134px] flex min-h-0 flex-1 flex-col overflow-hidden rounded-[10px] border-t-2 border-[#7d7d7d]">
        <TabStrip />
        <Toolbar />
        <PullRequestPage />
      </div>
      <Dock />
    </div>
  );
}
